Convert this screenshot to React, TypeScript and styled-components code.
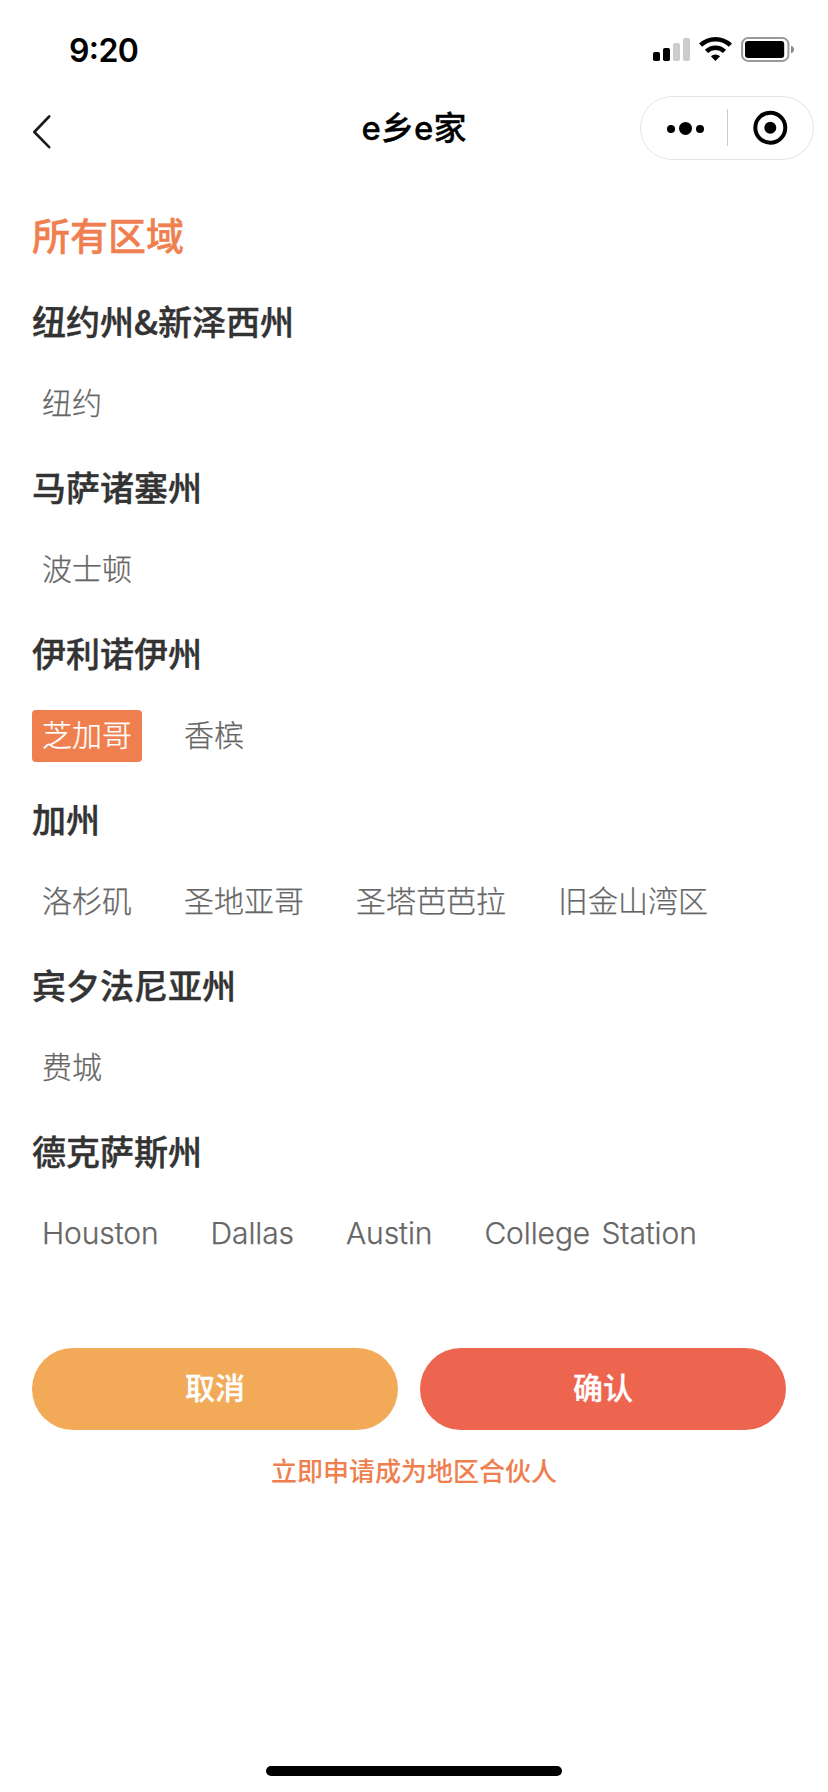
import React from "react";
import styled, { createGlobalStyle } from "styled-components";

const Global = createGlobalStyle`
  * { box-sizing: border-box; }
  body { margin: 0; background: #fff; font-family: "Noto Sans CJK SC", sans-serif; }
`;
const Screen = styled.div`
  width: 828px;
  height: 1792px;
  display: flex;
  flex-direction: column;
  background: #fff;
  overflow: hidden;
`;
const StatusBar = styled.header`
  height: 88px;
  padding: 12px 32px 0 69px;
  display: flex;
  align-items: center;
  justify-content: space-between;
`;
const Clock = styled.span`
  font: 600 32px/38px Inter, sans-serif;
  font-feature-settings: "case" 1;
  color: #000;
  letter-spacing: -0.6px;
  padding-top: 1px;
`;
const Indicators = styled.svg`
  display: block;
  width: 144px;
  height: 28px;
  margin-top: -1px;
`;
const NavBar = styled.nav`
  height: 80px;
  padding: 0 14px;
  display: grid;
  grid-template-columns: 174px 1fr 174px;
  align-items: center;
`;
const Back = styled.svg`
  display: block;
  width: 22px;
  height: 36px;
  margin: 8px 0 0 17px;
`;
const Title = styled.h1`
  margin: 0;
  text-align: center;
  font: 500 33px/48px Inter, "Noto Sans CJK SC", sans-serif;
  -webkit-text-stroke: 0.3px #000;
  color: #000;
`;
const Capsule = styled.div`
  width: 174px;
  height: 64px;
  border: 1px solid #e5e5e5;
  border-radius: 32px;
`;
const CapsuleIcons = styled.svg`
  display: block;
  width: 172px;
  height: 62px;
`;
const Content = styled.main`
  flex: 1;
  padding: 33px 42px 0 32px;
  display: flex;
  flex-direction: column;
`;
const PageTitle = styled.h2`
  margin: 0 0 18px;
  font-size: 38px;
  line-height: 66px;
  font-weight: 500;
  -webkit-text-stroke: 0.4px #ef7f4f;
  color: #ef7f4f;
`;
const Region = styled.section`
  height: 166px;
`;
const RegionName = styled.h3`
  margin: 0;
  font: 500 34px/72px "Noto Sans CJK SC", sans-serif;
  -webkit-text-stroke: 0.4px #333;
  color: #333;
`;
const Cities = styled.div`
  display: flex;
  gap: 32px;
  padding-top: 21px;
`;
const City = styled.button<{ $active?: boolean }>`
  height: 52px;
  border: 0;
  border-radius: 4px;
  padding: 0 10px 2px;
  font: 300 30px/50px Inter, "Noto Sans CJK SC", sans-serif;
  -webkit-text-stroke: 0.25px currentColor;
  white-space: nowrap;
  color: ${(p) => (p.$active ? "#fff" : "#666")};
  background: ${(p) => (p.$active ? "#ef7f4f" : "transparent")};

  &:lang(en) {
    letter-spacing: -0.1px;
    word-spacing: 3px;
  }
`;
const Actions = styled.div`
  display: flex;
  gap: 22px;
  margin-top: 67px;
`;
const Action = styled.button<{ $tone: string }>`
  flex: 1;
  height: 82px;
  border: 0;
  border-radius: 41px;
  padding: 0 0 6px;
  font: 500 30px/76px "Noto Sans CJK SC", sans-serif;
  -webkit-text-stroke: 0.3px #fff;
  color: #fff;
  background: ${(p) => p.$tone};
`;
const PartnerLink = styled.a`
  align-self: center;
  margin: 20px 0 0 10px;
  font: 500 26px/40px "Noto Sans CJK SC", sans-serif;
  color: #ef7f4f;
`;
const HomeIndicator = styled.div`
  align-self: center;
  width: 296px;
  height: 10px;
  margin-bottom: 16px;
  border-radius: 5px;
  background: #000;
`;

const regions = [
  { name: "纽约州&新泽西州", cities: ["纽约"] },
  { name: "马萨诸塞州", cities: ["波士顿"] },
  { name: "伊利诺伊州", cities: ["芝加哥", "香槟"] },
  { name: "加州", cities: ["洛杉矶", "圣地亚哥", "圣塔芭芭拉", "旧金山湾区"] },
  { name: "宾夕法尼亚州", cities: ["费城"] },
  { name: "德克萨斯州", lang: "en", cities: ["Houston", "Dallas", "Austin", "College Station"] },
];
const selected = "芝加哥";

export default function App() {
  return (
    <Screen>
      <Global />
      <StatusBar>
        <Clock>9:20</Clock>
        <Indicators viewBox="0 0 144 28">
          <rect x="1" y="16" width="7" height="9" rx="1.8" />
          <rect x="11" y="12" width="7" height="13" rx="1.8" />
          <rect x="21" y="7" width="7" height="18" rx="1.8" fill="#ccc" />
          <rect x="31" y="2" width="7" height="23" rx="1.8" fill="#ccc" />
          <g fill="none" stroke="#000" strokeWidth="4.6">
            <path d="M48.6 9.2a21.5 21.5 0 0 1 29.8 0" />
            <path d="M54.5 15.4a13 13 0 0 1 18 0" />
          </g>
          <path d="M58.9 20.3a6.8 6.8 0 0 1 9.2 0L63.5 25z" />
          <rect x="90.1" y="2.1" width="46.3" height="22.8" rx="6" fill="none" stroke="#999" strokeWidth="2" />
          <rect x="93" y="5" width="39.2" height="17" rx="3" />
          <path d="M139 9.8c4 1.2 4 6.3 0 7.5z" fill="#888" />
        </Indicators>
      </StatusBar>
      <NavBar>
        <Back viewBox="0 0 22 36" fill="none" stroke="#1a1a1a" strokeWidth="2.6" strokeLinecap="round" strokeLinejoin="round">
          <path d="M18.2 2.5 3.3 18l14.9 15.2" />
        </Back>
        <Title>e乡e家</Title>
        <Capsule>
          <CapsuleIcons viewBox="0 0 172 62">
            <circle cx="30" cy="32" r="4" />
            <circle cx="44.5" cy="31.4" r="6.5" />
            <circle cx="59" cy="32" r="4" />
            <path d="M86.5 12v37" stroke="#ccc" strokeWidth="1" />
            <circle cx="129.3" cy="30.7" r="15" fill="none" stroke="#000" strokeWidth="4" />
            <circle cx="129.3" cy="30.7" r="6" />
          </CapsuleIcons>
        </Capsule>
      </NavBar>
      <Content>
        <PageTitle>所有区域</PageTitle>
        {regions.map((r) => (
          <Region key={r.name}>
            <RegionName>{r.name}</RegionName>
            <Cities lang={r.lang}>
              {r.cities.map((c) => (
                <City key={c} $active={c === selected}>{c}</City>
              ))}
            </Cities>
          </Region>
        ))}
        <Actions>
          <Action $tone="#f2aa59">取消</Action>
          <Action $tone="#ed654f">确认</Action>
        </Actions>
        <PartnerLink>立即申请成为地区合伙人</PartnerLink>
      </Content>
      <HomeIndicator />
    </Screen>
  );
}
